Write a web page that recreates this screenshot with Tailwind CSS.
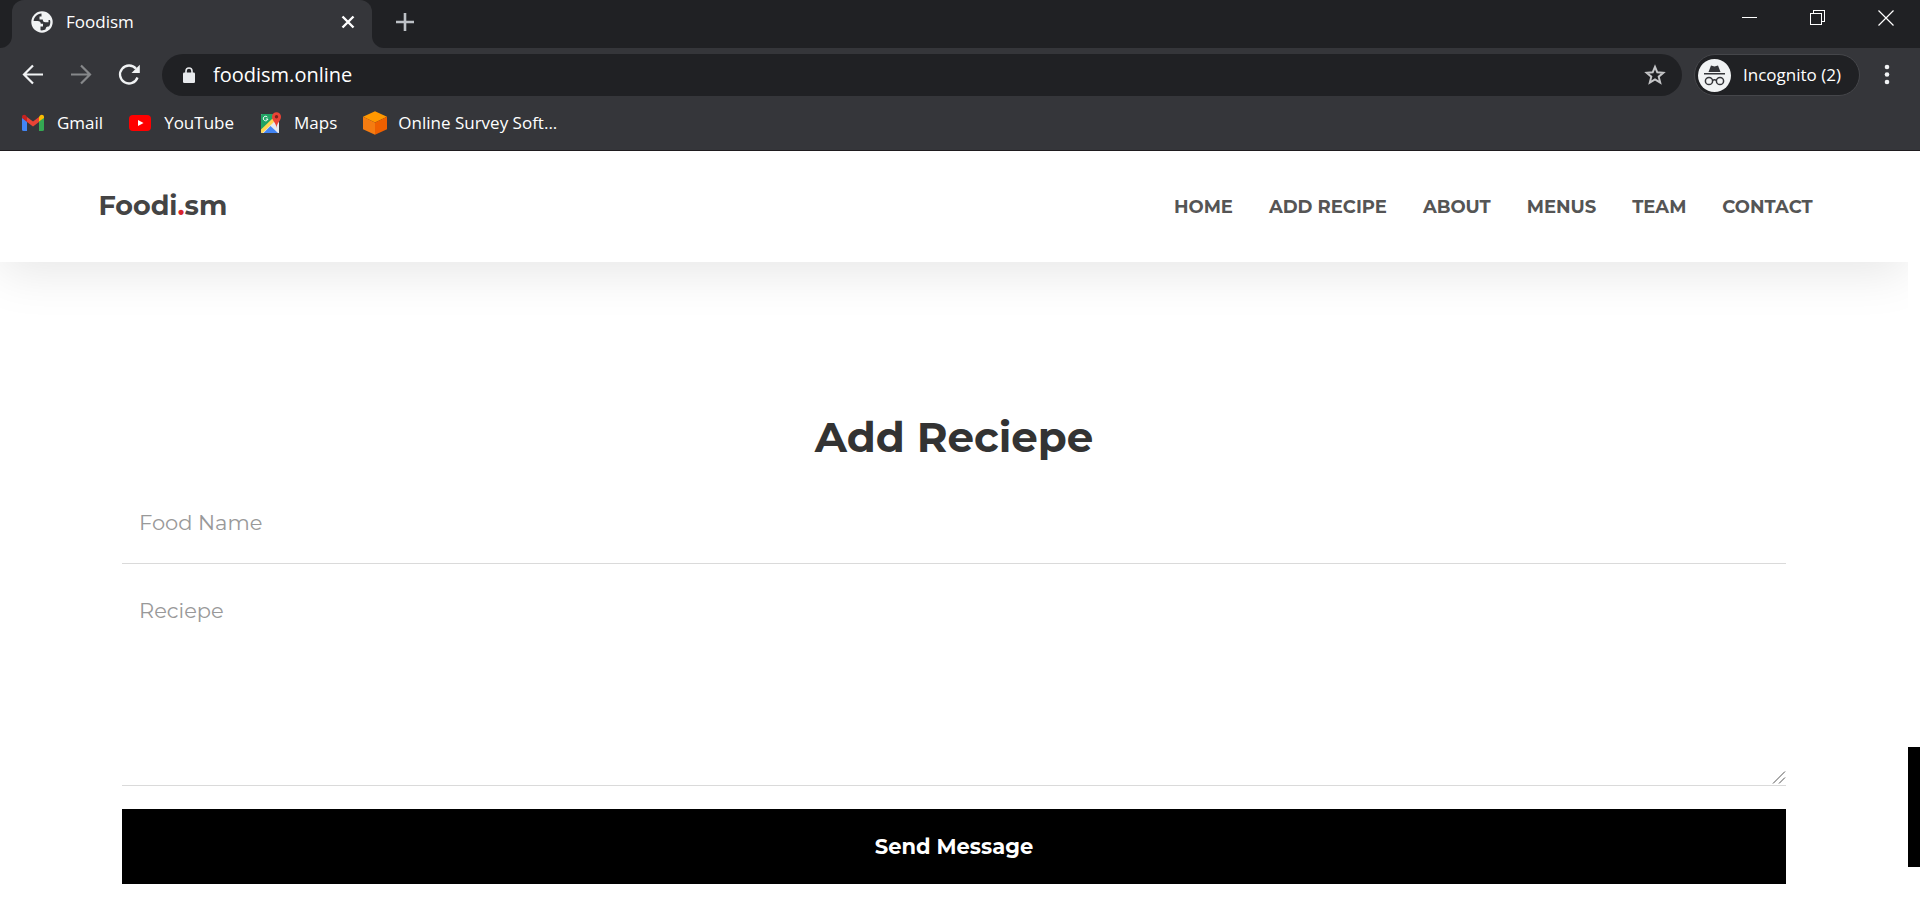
<!DOCTYPE html>
<html lang="en">
<head>
    <meta charset="UTF-8">
    <meta name="viewport" content="width=device-width, initial-scale=1.0">
    <title>Foodism</title>
    <script src="https://cdn.jsdelivr.net/npm/@tailwindcss/browser@4"></script>
</head>
<body class="flex h-screen flex-col overflow-hidden bg-white font-['Open_Sans',sans-serif] text-white">

    <!-- Browser window -->
    <header class="shrink-0 border-b border-[#1f1c1f] bg-[#35363a]">

        <!-- Tabs -->
        <div class="flex h-12 bg-[#202124]">
            <div class="w-3 bg-[#35363a]"><div class="h-full rounded-br-xl bg-[#202124]"></div></div>
            <div class="flex w-[360px] items-center rounded-t-xl bg-[#35363a] pr-4 pb-1 pl-[19px]">
                <svg class="mr-[13px] size-[22px]" viewBox="0 0 22 22">
                    <circle cx="11" cy="11" r="10.7" fill="#f1f3f4"/>
                    <path d="M10.5 2.6 C6 3 3 6.300 2.600 10 L6.500 10 C8.800 10 9.800 11.200 9.800 12.800 L12 12.800 L12 15.500 L9.500 15.500 L9.500 19.300 C11.500 19.600 13.500 19 14.600 18.300 C14.800 16.500 15.500 15.600 17 15.600 L18 15.600 C19.300 13.600 19.700 11.200 19 9 L17.500 9 L17.500 11.300 L14.300 11.300 C12.400 11.300 11.800 10.200 11.800 8.600 L8.500 8.600 L8.500 5.500 L10.500 5.500 Z" fill="#35363a"/>
                </svg>
                <span class="flex-1 text-[17px]">Foodism</span>
                <button aria-label="Close tab"><svg class="size-4" viewBox="0 0 16 16" fill="none" stroke="#fff" stroke-width="2.4"><path d="M2.500 2.500 13.500 13.500 M13.500 2.500 2.500 13.500"/></svg></button>
            </div>
            <div class="flex-1 bg-[#35363a]">
                <div class="flex h-full items-center rounded-bl-xl bg-[#202124] pr-[26px] pb-3 pl-6">
                    <button aria-label="New tab" class="mt-2"><svg class="size-[18px]" viewBox="0 0 18 18" fill="none" stroke="#bdc1c6" stroke-width="2.600"><path d="M9 0V18M0 9H18"/></svg></button>
                    <div class="ml-auto flex items-center gap-[52px]">
                        <button aria-label="Minimize"><svg class="size-4" viewBox="0 0 16 16" shape-rendering="crispEdges"><path d="M0 7H15V8H0Z" fill="#fff"/></svg></button>
                        <button aria-label="Restore"><svg class="size-4" viewBox="0 0 16 16" fill="none" stroke="#fff" shape-rendering="crispEdges"><path d="M.5 3.500H11.500V14.500H.5ZM3.500 3.500V.5H14.500V11.500H11.500"/></svg></button>
                        <button aria-label="Close"><svg class="size-4" viewBox="0 0 16 16" fill="none" stroke="#fff" stroke-width="1.200"><path d="M.5.5 15.500 15.500M15.500.5.5 15.500"/></svg></button>
                    </div>
                </div>
            </div>
        </div>

        <!-- Toolbar -->
        <div class="flex items-center pt-[6px] pr-[22px] pl-[22px]">
            <button aria-label="Back" class="mr-[26px]"><svg class="size-[22px]" viewBox="0 0 22 22" fill="none" stroke="#f1f3f4" stroke-width="2.200"><path d="M21 10.500H2.500M11 1.500 2 10.500 11 19.500"/></svg></button>
            <button aria-label="Forward" class="mr-[26px]"><svg class="size-[22px]" viewBox="0 0 22 22" fill="none" stroke="#86888a" stroke-width="2.200"><path d="M1 10.500H19.500M11 1.500 20 10.500 11 19.500"/></svg></button>
            <button aria-label="Reload" class="mr-[22px]"><svg class="size-[22px]" viewBox="0 0 22 22"><path d="M19.500 13.500A9 9 0 1 1 18 4.800" fill="none" stroke="#f1f3f4" stroke-width="2.300"/><path d="M21.800.7V9H13.500Z" fill="#f1f3f4"/></svg></button>
            <div class="flex h-[42px] flex-1 items-center rounded-full bg-[#202124] pr-4 pl-[21px]">
                <svg class="mr-[18px] h-4 w-3" viewBox="0 0 12 16"><rect y="5.500" width="12" height="10.500" rx="1.300" fill="#e8eaed"/><path d="M3 6V4A3 3 0 0 1 9 4V6" fill="none" stroke="#e8eaed" stroke-width="1.600"/></svg>
                <input type="text" aria-label="Address" value="foodism.online" class="flex-1 bg-transparent text-[20px] text-white outline-none">
                <button aria-label="Bookmark this page"><svg class="size-[22px]" viewBox="0 0 22 22" fill="none" stroke="#c4c5c7" stroke-width="2"><path d="M11 2.800 13.300 8.300 19.300 8.800 14.700 12.700 16.200 18.600 11 15.400 5.800 18.600 7.300 12.700 2.700 8.800 8.700 8.300Z"/></svg></button>
            </div>
            <button class="mr-4 ml-3 flex h-[42px] items-center gap-3 rounded-full border border-[#45464a] bg-[#202124] pr-[18px] pl-[3px] text-[17px]">
                <svg class="size-[33px]" viewBox="0 0 33 33">
                    <circle cx="16.500" cy="16.500" r="16.500" fill="#f1f3f4"/>
                    <path d="M13 6.500 16.500 7.500 20 6.500 22.500 13H10.500ZM6 14H27V15.600H6Z" fill="#35363a"/>
                    <g fill="none" stroke="#35363a" stroke-width="1.500"><circle cx="11" cy="22" r="3.600"/><circle cx="22" cy="22" r="3.600"/><path d="M14.500 21.500Q16.500 20 18.500 21.500"/></g>
                </svg>
                Incognito (2)
            </button>
            <button aria-label="Menu"><svg class="size-[22px]" viewBox="0 0 22 22" fill="#f1f3f4"><circle cx="11" cy="3" r="2.300"/><circle cx="11" cy="10.500" r="2.300"/><circle cx="11" cy="18" r="2.300"/></svg></button>
        </div>

        <!-- Bookmarks -->
        <nav class="flex h-[54px] items-center gap-[26px] pl-[22px] text-[17px]">
            <a href="#" class="flex items-center gap-[13px]">
                <svg class="size-[22px]" viewBox="0 0 22 22"><path d="M0 5.500V17.500Q0 19 1.500 19H5V9Z" fill="#4285f4"/><path d="M22 5.500V17.500Q22 19 20.500 19H17V9Z" fill="#34a853"/><path d="M17 5V9.500L22 6V5C22 2.800 19.500 2.300 18 3.500Z" fill="#fbbc04"/><path d="M5 5 11 9.500 17 5V10L11 14.500 5 10Z" fill="#ea4335"/><path d="M0 5V6L5 10V5L4 3.500C2.500 2.300 0 2.800 0 5Z" fill="#c5221f"/></svg>
                Gmail
            </a>
            <a href="#" class="flex items-center gap-[13px]">
                <svg class="size-[22px]" viewBox="0 0 22 22"><rect y="3" width="22" height="16" rx="4" fill="#f00"/><path d="M9 8V14L14.500 11Z" fill="#fff"/></svg>
                YouTube
            </a>
            <a href="#" class="flex items-center gap-3">
                <svg class="size-[22px]" viewBox="0 0 22 22">
                    <path d="M2 2H19V21H2Q1 21 1 20V3Q1 2 2 2Z" fill="#e8eaed"/>
                    <path d="M1 3Q1 2 2 2H15L13 8 1 19Z" fill="#1fa463"/>
                    <path d="M1 17.500 12.500 6.500 15 9 2.500 21Q1 21 1 20Z" fill="#ffd54f"/>
                    <path d="M3.500 21 10.500 14 18 21Z" fill="#4285f4"/>
                    <path d="M7.600 5.300A2.300 2.300 0 1 0 7.900 7H5.800" fill="none" stroke="#fff" stroke-width="1"/>
                    <path d="M16.500 16C16.300 11 12 9 12 4.800A4.500 4.500 0 0 1 21 4.800C21 9 16.700 11 16.500 16Z" fill="#ea4335"/><circle cx="16.500" cy="4.800" r="1.700" fill="#7b231e"/>
                </svg>
                Maps
            </a>
            <a href="#" class="flex items-center gap-[11px]">
                <svg class="size-6" viewBox="0 0 24 24"><path d="M12 .3 24 5.800 12 11.500 0 5.800Z" fill="#ff9800"/><path d="M0 5.800 12 11.500V23.700L0 18.200Z" fill="#f57c11"/><path d="M24 5.800 12 11.500V23.700L24 18.200Z" fill="#ef6000"/></svg>
                Online Survey Soft...
            </a>
        </nav>
    </header>

    <!-- Page -->
    <div class="flex min-h-0 flex-1 font-['Montserrat','Inter',sans-serif]">
        <div class="flex-1 overflow-hidden">
            <header class="flex h-[111px] items-center justify-between bg-white px-[5%] shadow-[0_10px_50px_rgba(0,0,0,0.1)]">
                <a href="#" class="pl-[3px] text-[27px] font-bold text-[#444]">Foodi<span class="text-[#d9232d]">.</span>sm</a>
                <nav class="flex gap-9 pt-px text-[18px] font-bold text-[#555]">
                    <a href="#">HOME</a>
                    <a href="#">ADD RECIPE</a>
                    <a href="#">ABOUT</a>
                    <a href="#">MENUS</a>
                    <a href="#">TEAM</a>
                    <a href="#">CONTACT</a>
                </nav>
            </header>

            <main class="px-[122px] pt-[143px]">
                <h1 class="text-center text-[42px] leading-[64px] font-bold text-[#333]">Add Reciepe</h1>
                <form class="flex flex-col text-[21px]">
                    <input type="text" id="foodName" aria-label="Food Name" placeholder="Food Name" class="mt-3 h-[83px] border-b border-[#dadada] px-[17px] text-[#333] outline-none placeholder:text-[#999]">
                    <div class="relative mt-6 flex">
                        <textarea id="recipe" aria-label="Reciepe" placeholder="Reciepe" class="h-[198px] w-full resize-y border-b border-[#dadada] px-[17px] py-[7px] text-[#333] outline-none placeholder:text-[#999]"></textarea>
                        <!-- Resize grip -->
                        <svg class="pointer-events-none absolute right-0 bottom-px size-[15px] bg-white" viewBox="0 0 15 15" stroke="#555" stroke-width="1"><path d="M2 13.500 14 1.500M8 13.500 14 7.500"/></svg>
                    </div>
                    <button type="submit" class="mt-[23px] h-[75px] bg-black font-bold text-white">Send Message</button>
                </form>
            </main>
        </div>

        <!-- Scrollbar -->
        <div class="flex w-3 flex-col bg-white pt-[596px]">
            <div class="h-[120px] bg-black"></div>
        </div>
    </div>
</body>
</html>
